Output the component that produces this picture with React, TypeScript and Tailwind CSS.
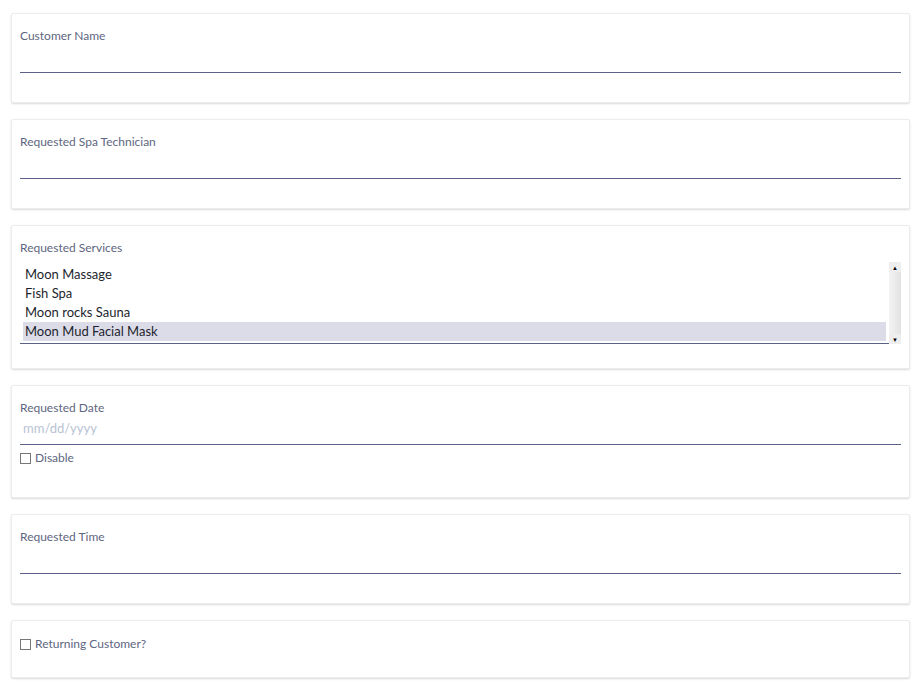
export default function App() {
  const font = { fontFamily: "Lato, 'Open Sans', sans-serif" };
  const card = "bg-white border border-[#ececec] shadow-[0_1px_2px_rgba(0,0,0,0.15)] rounded-[2px] px-2";
  const label = "text-[12px] text-[#5e6680] leading-[16px]";
  const line = "border-b border-[#5c6287]";
  return (
    <div className="w-[912px] h-[683px] bg-white pl-[11px] pr-[2px] pt-[13px] flex flex-col gap-[16px]" style={font}>
      <div className={card + " h-[90px] pt-[14px]"}>
        <div className={label}>Customer Name</div>
        <div className={line + " h-[29px]"}></div>
      </div>
      <div className={card + " h-[90px] pt-[14px]"}>
        <div className={label}>Requested Spa Technician</div>
        <div className={line + " h-[29px]"}></div>
      </div>
      <div className={card + " h-[144px] pt-[14px]"}>
        <div className={label}>Requested Services</div>
        <div className={line + " mt-[4px] h-[84px] flex pt-[5px] pl-[3px]"}>
          <div className="flex-1 text-[13px] text-[#1d1f2e] leading-[19px]">
            <div className="px-[2px]">Moon Massage</div>
            <div className="px-[2px]">Fish Spa</div>
            <div className="px-[2px]">Moon rocks Sauna</div>
            <div className="px-[2px] bg-[#dcdce8]">Moon Mud Facial Mask</div>
          </div>
          <div className="w-[12px] ml-[3px] -mt-[3px] h-[82px] flex flex-col items-center bg-gradient-to-r from-[#f4f4f4] to-[#e2e2e2]">
            <div className="h-[10px] w-full bg-[#eee] flex items-center justify-center text-[6px] text-black">▲</div>
            <div className="flex-1" />
            <div className="h-[10px] w-full bg-[#eee] flex items-center justify-center text-[6px] text-black">▼</div>
          </div>
        </div>
      </div>
      <div className={card + " h-[113px] pt-[14px]"}>
        <div className={label}>Requested Date</div>
        <div className={line + " h-[29px] flex items-end pb-[6px] pl-[3px] text-[13px] text-[#b8c2d4]"}>mm/dd/yyyy</div>
        <label className="flex items-center gap-[4px] mt-[4px] text-[12px] text-[#5e6680]">
          <span className="w-[11px] h-[11px] border border-[#777] inline-block" />Disable
        </label>
      </div>
      <div className={card + " h-[90px] pt-[14px]"}>
        <div className={label}>Requested Time</div>
        <div className={line + " h-[29px]"}></div>
      </div>
      <div className={card + " h-[58px] pt-[14px]"}>
        <label className="flex items-center gap-[4px] text-[12px] text-[#5e6680]">
          <span className="w-[11px] h-[11px] border border-[#777] inline-block" />Returning Customer?
        </label>
      </div>
    </div>
  );
}
